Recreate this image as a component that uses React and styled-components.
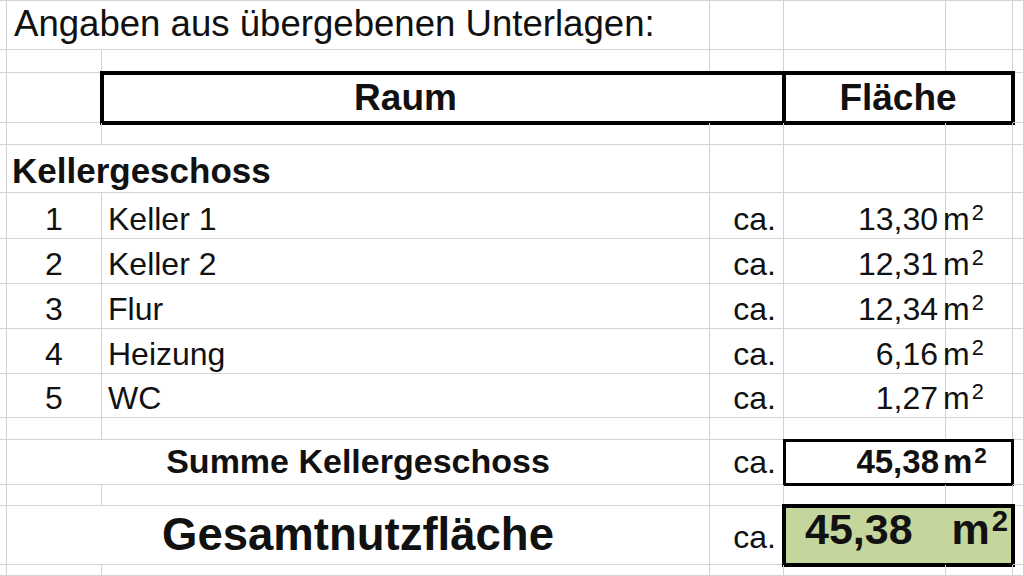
import styled, { createGlobalStyle } from 'styled-components'

const GRID = '#d3d3d3'
const COLUMNS = '7px 95px 608px 74px 162px 67px 11px'

const GlobalStyle = createGlobalStyle`
	html, body {
		margin: 0;
		padding: 0;
		background: #fff;
		overflow: hidden;
	}

	body {
		font-family: "Liberation Sans", Arial, sans-serif;
		color: #111;
	}
`

const Sheet = styled.div`
	width: 1024px;
	height: 576px;
	overflow: hidden;
	border-top: 1px solid ${GRID};
	box-sizing: border-box;
`

const Row = styled.div`
	display: grid;
	grid-template-columns: ${COLUMNS};
	height: ${(p) => p.$h}px;
`

const Cell = styled.div`
	grid-column: span ${(p) => p.$span || 1};
	display: flex;
	align-items: flex-end;
	justify-content: ${(p) => p.$justify || 'flex-start'};
	box-sizing: border-box;
	border-right: 1px solid ${GRID};
	border-bottom: 1px solid ${GRID};
	padding-bottom: ${(p) => (p.$pb !== undefined ? p.$pb : 3)}px;
	white-space: nowrap;
	line-height: 1;
	font-size: 32px;
	min-width: 0;
`

const Title = styled(Cell)`
	font-size: 36.6px;
	padding-left: 7px;
	padding-bottom: 6px;
`

const HeaderBox = styled(Cell)`
	align-items: center;
	justify-content: center;
	padding: 0 ${(p) => p.$pr || 0}px 0 0;
	font-size: 37px;
	font-weight: 700;
	outline: 4px solid #000;
	outline-offset: -2px;
`

const GroupLabel = styled(Cell)`
	font-size: 35px;
	font-weight: 700;
	padding-left: 5px;
	padding-bottom: 4px;
`

const Index = styled(Cell)`
	justify-content: center;
`

const RoomName = styled(Cell)`
	padding-left: 6px;
`

const Approx = styled(Cell)`
	justify-content: flex-end;
	padding-right: 7px;
`

const Amount = styled(Cell)`
	justify-content: flex-end;
	padding-right: 7px;
`

const Unit = styled(Cell)`
	padding-left: 0;
`

const UnitText = styled.span`
	margin-left: -3px;
`

const Sup = styled.span`
	display: inline-block;
	font-size: 0.68em;
	line-height: 0;
	vertical-align: 0.44em;
	margin-left: 2px;
`

const SumLabel = styled(Cell)`
	justify-content: center;
	font-size: 34px;
	font-weight: 700;
`

const SumBox = styled(Cell)`
	display: grid;
	grid-template-columns: 162px 1fr;
	align-items: end;
	font-size: 33px;
	font-weight: 700;
	outline: 3px solid #000;
	outline-offset: -2px;
`

const SumAmount = styled.span`
	text-align: right;
	padding-right: 7px;
`

const TotalLabel = styled(Cell)`
	justify-content: center;
	font-size: 45.5px;
	font-weight: 700;
`

const TotalBox = styled(Cell)`
	justify-content: space-between;
	padding: 0 4px 13px 21px;
	font-size: 43px;
	font-weight: 700;
	background: #c4d69b;
	outline: 4px solid #000;
	outline-offset: -2px;
`

const rooms = [
	{ no: 1, name: 'Keller 1', area: '13,30', h: 46 },
	{ no: 2, name: 'Keller 2', area: '12,31', h: 45 },
	{ no: 3, name: 'Flur', area: '12,34', h: 45 },
	{ no: 4, name: 'Heizung', area: '6,16', h: 45 },
	{ no: 5, name: 'WC', area: '1,27', h: 44 },
]

const SquareMetre = () => (
	<UnitText>
		m<Sup>2</Sup>
	</UnitText>
)

const BlankRow = ({ h }) => (
	<Row $h={h}>
		{Array.from({ length: 7 }).map((_, i) => (
			<Cell key={i} />
		))}
	</Row>
)

export default function App() {
	return (
		<Sheet>
			<GlobalStyle />

			<Row $h={49}>
				<Cell />
				<Title $span={2}>Angaben aus übergebenen Unterlagen:</Title>
				<Cell />
				<Cell />
				<Cell />
				<Cell />
			</Row>

			<BlankRow h={23} />

			<Row $h={50}>
				<Cell />
				<Cell />
				<HeaderBox $span={2} $pr={74}>
					Raum
				</HeaderBox>
				<HeaderBox $span={2}>Fläche</HeaderBox>
				<Cell />
			</Row>

			<BlankRow h={22} />

			<Row $h={48}>
				<Cell />
				<GroupLabel $span={2}>Kellergeschoss</GroupLabel>
				<Cell />
				<Cell />
				<Cell />
				<Cell />
			</Row>

			{rooms.map((r) => (
				<Row $h={r.h} key={r.no}>
					<Cell />
					<Index>{r.no}</Index>
					<RoomName>{r.name}</RoomName>
					<Approx>ca.</Approx>
					<Amount>{r.area}</Amount>
					<Unit>
						<SquareMetre />
					</Unit>
					<Cell />
				</Row>
			))}

			<BlankRow h={22} />

			<Row $h={45}>
				<Cell />
				<SumLabel $span={2} $pb={6}>
					Summe Kellergeschoss
				</SumLabel>
				<Approx $pb={6}>ca.</Approx>
				<SumBox $span={2} $pb={6}>
					<SumAmount>45,38</SumAmount>
					<SquareMetre />
				</SumBox>
				<Cell />
			</Row>

			<BlankRow h={21} />

			<Row $h={59}>
				<Cell />
				<TotalLabel $span={2} $pb={7}>
					Gesamtnutzfläche
				</TotalLabel>
				<Approx $pb={11}>ca.</Approx>
				<TotalBox $span={2}>
					<span>45,38</span>
					<span>
						m<Sup>2</Sup>
					</span>
				</TotalBox>
				<Cell />
			</Row>

			<BlankRow h={11} />
		</Sheet>
	)
}
